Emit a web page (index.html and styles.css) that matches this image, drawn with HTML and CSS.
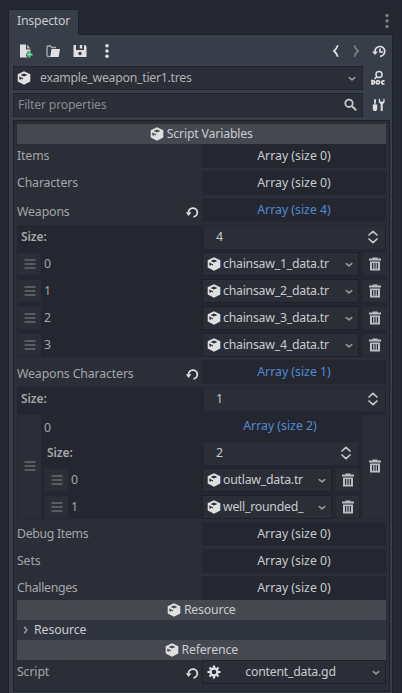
FILE: index.html
```html
<!DOCTYPE html>
<html lang="en">
<head>
<meta charset="utf-8">
<title>Inspector</title>
<link rel="stylesheet" href="styles.css">
</head>
<body>
<svg class="defs" width="0" height="0">
  <symbol id="cube" viewBox="0 0 16 16"><path fill="#e0e0e0" fill-rule="evenodd" d="M8 1.300 14.300 4.300V11.600L8 14.700 1.700 11.600V4.300ZM8 3.400 4.600 5 8 6.600 11.400 5ZM3.300 6.500V9.300L4.700 10V8.400L7 9.500V8.200Z"/></symbol>
  <symbol id="trash" viewBox="0 0 16 16"><path fill="#bdbec1" fill-rule="evenodd" d="M5.500 1.500h5v1H14v2H2v-2h3.500ZM3 5.500h10v9H3ZM5 7v5.800h1.200V7ZM7.400 7v5.800h1.200V7ZM9.800 7v5.800H11V7Z"/></symbol>
  <symbol id="grip" viewBox="0 0 16 16"><path stroke="#85878c" stroke-width="1.200" d="M2.500 4h11M2.500 8h11M2.500 12h11"/></symbol>
  <symbol id="down" viewBox="0 0 8 8"><path fill="none" stroke="#96989d" stroke-width="1.600" stroke-linecap="round" stroke-linejoin="round" d="m1.300 3.600 2.700 2.300 2.700-2.300"/></symbol>
  <symbol id="spin" viewBox="0 0 12 14"><path fill="none" stroke="#c6c7ca" stroke-width="1.700" stroke-linecap="round" stroke-linejoin="round" d="m2 5 4-3.700L10 5M2 9l4 3.700L10 9"/></symbol>
  <symbol id="undo" viewBox="0 0 14 14"><path fill="none" stroke="#e0e0e0" stroke-width="1.800" d="M3.500 7.500a4.400 4.400 0 1 1 5 4.400"/><path fill="#e0e0e0" d="M.8 7.200h5.600L3.600 11Z"/></symbol>
</svg>

<div class="dock">
  <div class="tabs"><div class="tab">Inspector</div>
    <svg class="dock-menu" viewBox="0 0 4 16"><g fill="#7c7e84"><circle cx="2" cy="2.500" r="1.700"/><circle cx="2" cy="8" r="1.700"/><circle cx="2" cy="13.400" r="1.700"/></g></svg>
  </div>
  <div class="panel">
    <div class="toolbar">
      <svg class="i16" viewBox="0 0 16 16"><path fill="#e0e0e0" d="M2 1.500h6v5h4.500v2H9.500v2h-1.500v3h1.500v1H2Z"/><path fill="#b5b6b8" d="M9 1.500 12.500 5.500H9Z"/><path fill="none" stroke="#5fe792" stroke-width="1.800" d="M11.500 8.500v6M8.500 11.500h6"/></svg>
      <svg class="i16" viewBox="0 0 16 16"><path fill="none" stroke="#aeb0b4" stroke-width="1.300" d="M4.500 13.500h-1q-1.500 0-1.500-1.500V4q0-1 1-1h2.500l1.500 1.500h4"/><path fill="#e0e0e0" d="M6.500 6H15l-1.300 8H4.500q1-.5 1-2Z"/></svg>
      <svg class="i16" viewBox="0 0 16 16"><path fill="#e0e0e0" fill-rule="evenodd" d="M1.500 2h2.500v5h8V2h1l1.500 1.500V14h-13ZM8 8.800a1.700 1.700 0 1 0 .01 0ZM7.800 2h2.400v3.500H7.800Z"/></svg>
      <svg class="i16" viewBox="0 0 16 16"><g fill="#e0e0e0"><circle cx="8" cy="2.700" r="1.800"/><circle cx="8" cy="8" r="1.800"/><circle cx="8" cy="13.300" r="1.800"/></g></svg>
      <svg class="nav first" viewBox="0 0 8 14"><path fill="none" stroke="#e0e0e0" stroke-width="1.700" d="M5.800 1.200Q4.500 5 2 7q2.500 2 3.800 5.800"/></svg>
      <svg class="nav" viewBox="0 0 8 14"><path fill="none" stroke="#7b7f89" stroke-width="1.700" d="M2.200 1.200Q3.500 5 6 7q-2.500 2-3.800 5.800"/></svg>
      <svg class="i16 history" viewBox="0 0 16 16"><path fill="none" stroke="#e0e0e0" stroke-width="1.700" d="M4 9a4.900 4.900 0 1 1 5 4.300M9 5.500V9H12"/><path fill="#e0e0e0" d="M1 8.500h6L4 12Z"/></svg>
    </div>
    <div class="bar">
      <div class="picker"><svg class="i16"><use href="#cube"/></svg><span class="path">example_weapon_tier1.tres</span><svg class="i8"><use href="#down"/></svg></div>
      <svg class="i16" viewBox="0 0 16 16"><circle cx="9" cy="4.500" r="3" fill="none" stroke="#e0e0e0" stroke-width="1.500"/><path fill="none" stroke="#e0e0e0" stroke-width="1.700" d="m6.800 6.800-2.300 2.200M2 10.500v3.400h.8q1.700 0 1.700-1.700t-1.700-1.700ZM8 10.500q-1.600 0-1.600 1.800T8 14t1.600-1.700T8 10.500ZM14.500 10.800h-1q-1.800 0-1.800 1.600t1.800 1.600h1"/></svg>
    </div>
    <div class="bar">
      <div class="filter"><span>Filter properties</span><svg class="i16" viewBox="0 0 16 16"><circle cx="7" cy="6.300" r="3.700" fill="none" stroke="#c7c8cb" stroke-width="1.800"/><path stroke="#c7c8cb" stroke-width="2" stroke-linecap="round" d="m10 9.300 3.700 3.500"/></svg></div>
      <svg class="i16" viewBox="0 0 16 16"><path fill="#e0e0e0" d="M4.300 2h1.400L6 4.500 5.500 7.500H7.200v5L6 14H4l-1.200-1.500v-5h1.700L4 4.500ZM8.800 2v3.200l1.900 2V14h2V7.200l1.900-2V2l-1.200-.4v3H10v-3Z"/></svg>
    </div>

    <div class="tree">
      <div class="category"><svg class="i16"><use href="#cube"/></svg><span>Script Variables</span></div>
      <div class="rows">
        <div class="prop"><span class="name">Items</span><div class="value">Array (size 0)</div></div>
        <div class="prop"><span class="name">Characters</span><div class="value">Array (size 0)</div></div>
        <div class="prop"><span class="name low">Weapons</span><svg class="undo"><use href="#undo"/></svg><div class="value blue">Array (size 4)</div></div>
        <div class="array">
          <div class="size"><b>Size:</b><div class="number"><span>4</span><svg class="spin"><use href="#spin"/></svg></div></div>
          <div class="item"><div class="grip"><svg class="i16"><use href="#grip"/></svg></div><span class="idx">0</span><div class="res"><svg class="i16"><use href="#cube"/></svg><span>chainsaw_1_data.tr</span><svg class="i8"><use href="#down"/></svg></div><div class="del"><svg class="i16"><use href="#trash"/></svg></div></div>
          <div class="item"><div class="grip"><svg class="i16"><use href="#grip"/></svg></div><span class="idx">1</span><div class="res"><svg class="i16"><use href="#cube"/></svg><span>chainsaw_2_data.tr</span><svg class="i8"><use href="#down"/></svg></div><div class="del"><svg class="i16"><use href="#trash"/></svg></div></div>
          <div class="item"><div class="grip"><svg class="i16"><use href="#grip"/></svg></div><span class="idx">2</span><div class="res"><svg class="i16"><use href="#cube"/></svg><span>chainsaw_3_data.tr</span><svg class="i8"><use href="#down"/></svg></div><div class="del"><svg class="i16"><use href="#trash"/></svg></div></div>
          <div class="item"><div class="grip"><svg class="i16"><use href="#grip"/></svg></div><span class="idx">3</span><div class="res"><svg class="i16"><use href="#cube"/></svg><span>chainsaw_4_data.tr</span><svg class="i8"><use href="#down"/></svg></div><div class="del"><svg class="i16"><use href="#trash"/></svg></div></div>
        </div>
        <div class="prop"><span class="name low">Weapons Characters</span><svg class="undo"><use href="#undo"/></svg><div class="value blue">Array (size 1)</div></div>
        <div class="array">
          <div class="size"><b>Size:</b><div class="number"><span>1</span><svg class="spin"><use href="#spin"/></svg></div></div>
          <div class="nested">
            <div class="grip"><svg class="i16"><use href="#grip"/></svg></div>
            <div class="inner">
              <div class="prop"><span class="idx low">0</span><div class="value blue">Array (size 2)</div></div>
              <div class="size"><b>Size:</b><div class="number"><span>2</span><svg class="spin"><use href="#spin"/></svg></div></div>
              <div class="item"><div class="grip"><svg class="i16"><use href="#grip"/></svg></div><span class="idx">0</span><div class="res"><svg class="i16"><use href="#cube"/></svg><span>outlaw_data.tr</span><svg class="i8"><use href="#down"/></svg></div><div class="del"><svg class="i16"><use href="#trash"/></svg></div></div>
              <div class="item"><div class="grip"><svg class="i16"><use href="#grip"/></svg></div><span class="idx">1</span><div class="res"><svg class="i16"><use href="#cube"/></svg><span>well_rounded_</span><svg class="i8"><use href="#down"/></svg></div><div class="del"><svg class="i16"><use href="#trash"/></svg></div></div>
            </div>
            <div class="del"><svg class="i16"><use href="#trash"/></svg></div>
          </div>
        </div>
        <div class="prop"><span class="name tight">Debug Items</span><div class="value">Array (size 0)</div></div>
        <div class="prop"><span class="name">Sets</span><div class="value">Array (size 0)</div></div>
        <div class="prop"><span class="name tight">Challenges</span><div class="value">Array (size 0)</div></div>
      </div>
      <div class="category"><svg class="i16"><use href="#cube"/></svg><span>Resource</span></div>
      <div class="fold"><svg class="i8"><use href="#down"/></svg><span>Resource</span></div>
      <div class="category"><svg class="i16"><use href="#cube"/></svg><span>Reference</span></div>
      <div class="prop"><span class="name">Script</span><svg class="undo up"><use href="#undo"/></svg>
        <div class="res script"><svg class="i16" viewBox="0 0 16 16"><circle cx="8" cy="8" r="3.500" fill="none" stroke="#e0e0e0" stroke-width="2.400"/><path stroke="#e0e0e0" stroke-width="2.200" d="M8 1.500v2.500M8 12v2.500M1.500 8h2.500M12 8h2.500M3.500 3.500 5 5M11 11l1.500 1.500M12.500 3.500 11 5M5 11l-1.500 1.500"/></svg><span>content_data.gd</span><svg class="i8"><use href="#down"/></svg></div>
      </div>
    </div>
  </div>
</div>
</body>
</html>
```
FILE: styles.css
```css
* { box-sizing: border-box; }
body {
  margin: 0;
  width: 402px;
  height: 693px;
  overflow: hidden;
  background: #252830;
  color: #c9cbce;
  font: 12.3px/18px "Noto Sans", sans-serif;
  white-space: nowrap;
}
svg { display: block; flex: none; }
.defs { position: absolute; }
.i16 { width: 16px; height: 16px; }
.i8 { width: 8px; height: 8px; }
.dock {
  height: 693px;
  padding: 9px 8px 0 8px;
  display: flex;
  flex-direction: column;
  border-right: 1px solid #1e2129;
}
.tabs { display: flex; height: 25px; justify-content: space-between; }
.tab {
  height: 26px;
  width: 71px;
  padding: 2px 0 0 8px;
  background: #383d4a;
  border: 1px solid #1e2129;
  border-bottom: 0;
  position: relative;
  letter-spacing: -.2px;
}
.dock-menu { width: 4px; height: 16px; margin: 4px 4px 0 0; }
.panel {
  flex: 1;
  background: #383d4a;
  border: 1px solid #1e2129;
  border-bottom: 0;
  padding: 8px 3px 0 4px;
}
.toolbar { display: flex; height: 23px; padding-left: 4.5px; gap: 11px; align-items: flex-start; }
.nav { width: 8px; height: 14px; margin-top: 1px; }
.nav.first { margin-left: auto; }
.nav + .nav { margin-left: 1px; }
.history { margin-right: 2px; }
.bar { display: flex; align-items: center; justify-content: space-between; padding-right: 3px; margin-bottom: 3px; }
.picker, .filter {
  width: 350px;
  height: 24px;
  border: 1px solid #22252d;
  background: #2b2e37;
  display: flex;
  align-items: center;
  justify-content: space-between;
}
.picker { padding: 0 6px 0 1.5px; }
.path { flex: 1; padding-left: 8.500px; color: #b0b1b5; letter-spacing: -.27px; }
.filter { padding: 0 4px; color: #888b91; letter-spacing: -.22px; }
.tree {
  height: 572px;
  border: 1px solid #1e2129;
  background: #2b2e37;
  padding: 3px;
  width: 377px;
}
.category {
  height: 20px;
  background: #45484f;
  display: flex;
  align-items: center;
  justify-content: center;
  gap: 2px;
  letter-spacing: -.18px;
  padding-right: 1.500px;
}
.rows { display: flex; flex-direction: column; gap: 3px; }
.prop { height: 24px; display: flex; align-items: center; justify-content: flex-end; }
.name { flex: 1; color: #a4a6aa; letter-spacing: -.13px; }
.tight { letter-spacing: -.32px; }
.low { padding-top: 4px; }
.undo { width: 14px; height: 14px; margin: 3px 3px 0 0; }
.undo.up { margin-top: 1px; }
.value {
  width: 184px;
  height: 24px;
  line-height: 24px;
  background: #24272f;
  text-align: center;
}
.blue { color: #4f8cd2; }
.array { background: #24272f; height: 132px; padding: 0 0 0 1px; }
.size { height: 24px; display: flex; justify-content: space-between; align-items: center; padding: 0 1px 0 3px; color: #a4a6aa; }
.size b { font-weight: 600; font-size: 12px; letter-spacing: -.1px; }
.number {
  width: 181px;
  height: 23px;
  background: #2b2e37;
  padding: 0 6px 0 12px;
  display: flex;
  align-items: center;
  justify-content: space-between;
  color: #c9cbce;
}
.spin { width: 12px; height: 14px; }
.item { height: 24px; margin-top: 3px; display: flex; align-items: center; }
.grip, .del { width: 23px; height: 22px; background: #2b2e37; display: flex; align-items: center; padding-left: 3.500px; }
.idx { flex: 1; padding-left: 3px; color: #a4a6aa; }
.res {
  width: 157px;
  height: 24px;
  border: 1px solid #1e2129;
  background: #2b2e37;
  display: flex;
  align-items: center;
  padding: 0 5px 0 3px;
  letter-spacing: -.24px;
}
.res span { flex: 1; padding-left: 1px; }
.item > .del { margin-left: 4px; }
.nested { display: flex; margin-top: 3px; height: 105px; align-items: center; }
.nested > .grip, .nested > .del { height: 103px; margin-top: -1px; }
.nested > .del { margin-left: 4px; }
.inner { flex: 1; }
.inner .prop .value { width: 157px; padding-right: 1px; }
.inner .size { margin-top: 3px; padding-left: 6px; }
.inner .number { width: 154px; }
.inner .item { padding-left: 4px; }
.inner .res { width: 130px; }
.fold { height: 20px; background: #30343e; display: flex; align-items: center; gap: 5px; padding-left: 4px; letter-spacing: -.1px; }
.fold svg { transform: rotate(-90deg); }
.res.script { width: 184px; }
.script span { text-align: center; padding: 0 13px 0 0; }
```
